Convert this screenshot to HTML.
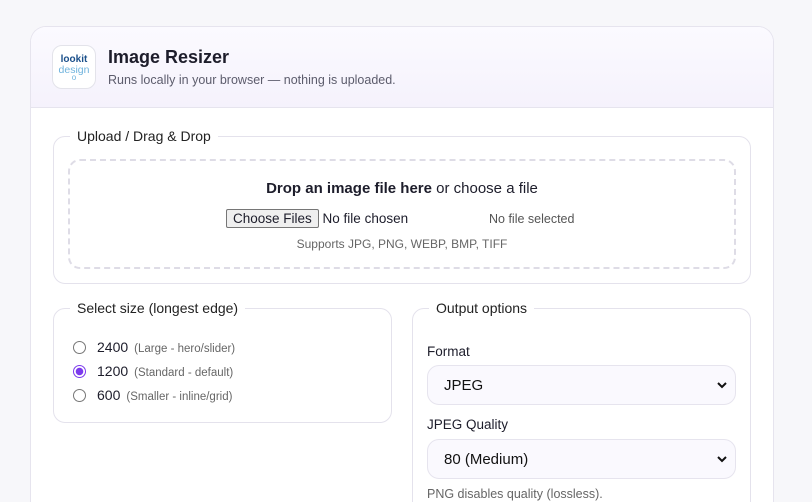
<!DOCTYPE html>
<html><head><meta charset="utf-8"><style>
*{box-sizing:border-box}
html{width:812px;height:502px;overflow:hidden}
body{margin:0;width:812px;height:502px;overflow:hidden;background:#f7f7fa;font-family:"Liberation Sans",sans-serif;color:#1d1d2b;position:relative}
.card{position:absolute;left:30px;top:26px;width:744px;height:476px;background:#fff;border:1px solid #e6e4ee;border-bottom:none;border-radius:16px 16px 0 0;overflow:hidden}
.hdr{position:absolute;left:0;top:0;right:0;height:81px;background:linear-gradient(180deg,#fbfaff,#f5f2fc);border-bottom:1px solid #e6e4ee}
.logo{position:absolute;left:21px;top:18px;width:44px;height:44px;border:1px solid #e3e3ea;border-radius:10px;background:#fff;text-align:center;font-size:10px;line-height:10px}
.fs{position:absolute;border:1px solid #e4e2ec;border-radius:12px}
.lg{position:absolute;top:-9px;background:#fff;padding:0 7px;font-size:14px;color:#222}
.sel{position:absolute;left:14px;width:309px;height:40px;border:1px solid #e6e4ee;border-radius:12px;background:#faf9fe;font-size:15px;padding:11px 0 0 16px;color:#111}
.sel svg{position:absolute;right:8px;top:15px}
.r{position:absolute;left:19px;font-size:14px}
.r i{position:absolute;left:0;top:2px;width:13px;height:13px;border:1px solid #777;border-radius:50%}
.r span{position:absolute;left:24px;white-space:nowrap}
.r small{font-size:11.5px;color:#666;margin-left:6px}
</style></head><body>
<div class="card">
 <div class="hdr">
  <div class="logo"><div style="margin-top:9px;color:#1a4f8a;font-weight:bold;font-size:10px">lookit</div><div style="color:#6fb3dd;font-size:10.5px">design</div><div style="color:#6fb3dd;font-size:8px;line-height:6px">o</div></div>
  <div style="position:absolute;left:77px;top:20px;font-size:18px;font-weight:bold">Image Resizer</div>
  <div style="position:absolute;left:77px;top:46px;font-size:12.5px;color:#5c5c6c">Runs locally in your browser — nothing is uploaded.</div>
 </div>
 <div class="fs" style="left:22px;top:109px;width:698px;height:148px">
  <div class="lg" style="left:16px">Upload / Drag &amp; Drop</div>
  <div style="position:absolute;left:14px;top:22px;width:668px;height:110px;border:2px dashed #dedce6;border-radius:12px">
   <div style="position:absolute;left:0;right:0;top:19px;text-align:center;font-size:15px"><b>Drop an image file here</b> or choose a file</div>
   <div style="position:absolute;left:156px;top:48px;font-size:13.5px;white-space:nowrap"><span style="display:inline-block;border:1px solid #767676;background:#efefef;border-radius:2px;padding:1px 6px;font-size:13.5px">Choose Files</span> No file chosen</div>
   <div style="position:absolute;left:419px;top:51px;font-size:12.5px;color:#555">No file selected</div>
   <div style="position:absolute;left:0;right:0;top:76px;text-align:center;font-size:12px;color:#666">Supports JPG, PNG, WEBP, BMP, TIFF</div>
  </div>
 </div>
 <div class="fs" style="left:22px;top:281px;width:339px;height:115px">
  <div class="lg" style="left:16px">Select size (longest edge)</div>
  <div class="r" style="top:30px"><i></i><span>2400<small>(Large - hero/slider)</small></span></div>
  <div class="r" style="top:54px"><i style="border:1.5px solid #7c3aed;background:radial-gradient(circle,#7c3aed 3.5px,#fff 4px)"></i><span>1200<small>(Standard - default)</small></span></div>
  <div class="r" style="top:78px"><i></i><span>600<small>(Smaller - inline/grid)</small></span></div>
 </div>
 <div class="fs" style="left:381px;top:281px;width:339px;height:220px">
  <div class="lg" style="left:16px">Output options</div>
  <div style="position:absolute;left:14px;top:35px;font-size:13.5px">Format</div>
  <div class="sel" style="top:56px">JPEG<svg width="10" height="8" viewBox="0 0 10 8"><path d="M1 2l4 4 4-4" stroke="#111" stroke-width="2" fill="none"/></svg></div>
  <div style="position:absolute;left:14px;top:108px;font-size:13.5px">JPEG Quality</div>
  <div class="sel" style="top:130px">80 (Medium)<svg width="10" height="8" viewBox="0 0 10 8"><path d="M1 2l4 4 4-4" stroke="#111" stroke-width="2" fill="none"/></svg></div>
  <div style="position:absolute;left:14px;top:178px;font-size:12.5px;color:#666">PNG disables quality (lossless).</div>
 </div>
</div>
</body></html>
